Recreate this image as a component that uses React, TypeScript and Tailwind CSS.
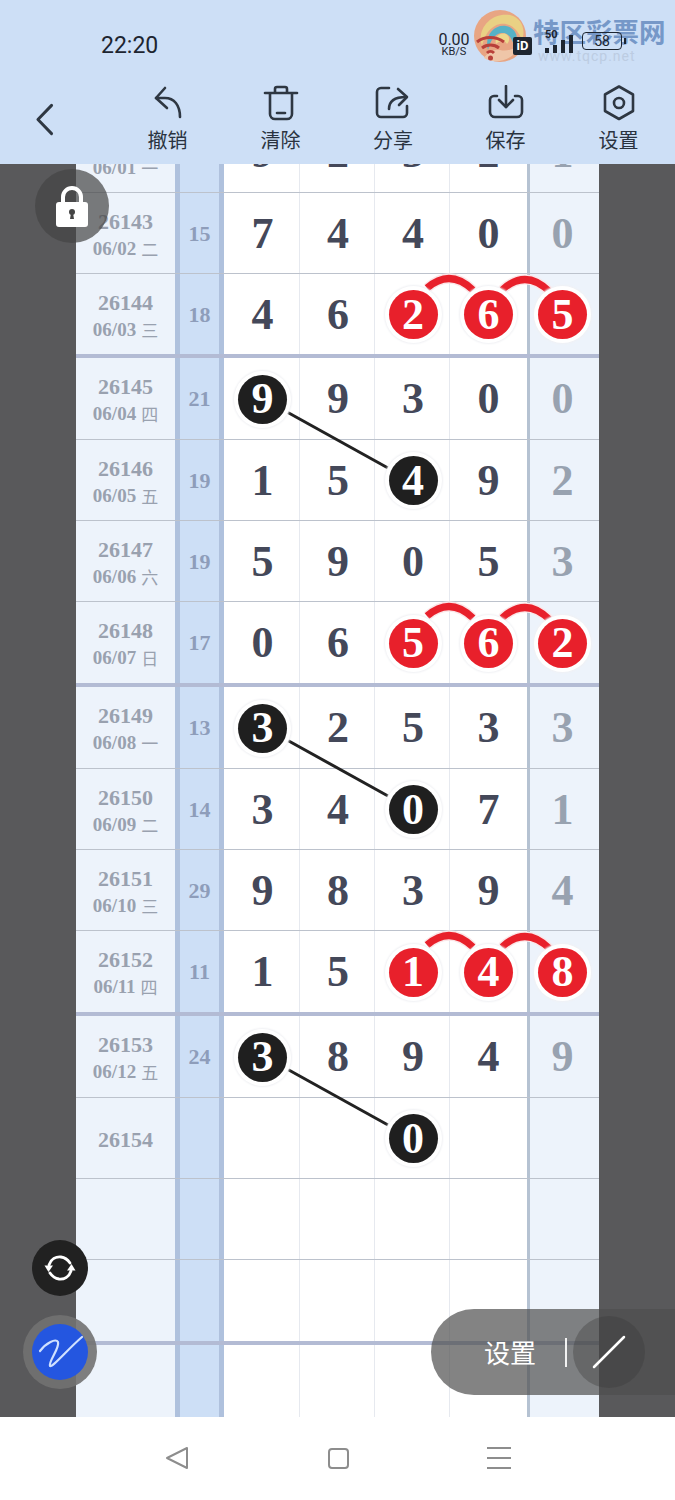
import React from 'react';

const serif = "font-['Liberation_Serif',serif]";
const cjk = "font-['Noto_Sans_CJK_SC','Noto_Sans',sans-serif]";

type RowData = {
  id?: string;
  date?: string;
  week?: string;
  sum?: string;
  nums?: string[];
  last?: string;
  h: string;
  thick?: boolean;
  black?: number;
  red?: boolean;
};

const rows: RowData[] = [
  { id: '26142', date: '06/01', week: '一', sum: '16', nums: ['9', '2', '3', '2'], last: '1', h: 'h-[81px]' },
  { id: '26143', date: '06/02', week: '二', sum: '15', nums: ['7', '4', '4', '0'], last: '0', h: 'h-[81px]' },
  { id: '26144', date: '06/03', week: '三', sum: '18', nums: ['4', '6', '2', '6'], last: '5', h: 'h-[84px]', thick: true, red: true },
  { id: '26145', date: '06/04', week: '四', sum: '21', nums: ['9', '9', '3', '0'], last: '0', h: 'h-[82px]', black: 0 },
  { id: '26146', date: '06/05', week: '五', sum: '19', nums: ['1', '5', '4', '9'], last: '2', h: 'h-[81px]', black: 2 },
  { id: '26147', date: '06/06', week: '六', sum: '19', nums: ['5', '9', '0', '5'], last: '3', h: 'h-[81px]' },
  { id: '26148', date: '06/07', week: '日', sum: '17', nums: ['0', '6', '5', '6'], last: '2', h: 'h-[85px]', thick: true, red: true },
  { id: '26149', date: '06/08', week: '一', sum: '13', nums: ['3', '2', '5', '3'], last: '3', h: 'h-[82px]', black: 0 },
  { id: '26150', date: '06/09', week: '二', sum: '14', nums: ['3', '4', '0', '7'], last: '1', h: 'h-[81px]', black: 2 },
  { id: '26151', date: '06/10', week: '三', sum: '29', nums: ['9', '8', '3', '9'], last: '4', h: 'h-[81px]' },
  { id: '26152', date: '06/11', week: '四', sum: '11', nums: ['1', '5', '1', '4'], last: '8', h: 'h-[85px]', thick: true, red: true },
  { id: '26153', date: '06/12', week: '五', sum: '24', nums: ['3', '8', '9', '4'], last: '9', h: 'h-[82px]', black: 0 },
  { id: '26154', nums: ['', '', '0', ''], h: 'h-[81px]', black: 2 },
  { h: 'h-[81px]' },
  { h: 'h-[85px]', thick: true },
  { h: 'h-[81px]' },
];

function Ball({ n, red }: { n: string; red?: boolean }) {
  return (
    <span
      className={`relative z-20 flex h-[49px] w-[49px] items-center justify-center rounded-full text-[44px] font-bold leading-none text-white shadow-[0_0_0_4px_#fff,0_0_2px_5px_#f0f1f4] ${red ? 'bg-[#e8202b]' : 'bg-[#1f1f1f]'}`}
    >
      {n}
    </span>
  );
}

function Row({ row }: { row: RowData }) {
  const line = row.thick ? 'border-b-4 border-[#b3bbd4]' : 'border-b border-[#bcc2cc]';
  const nums = row.nums || ['', '', '', ''];
  const ballAt = (i: number) => row.black === i || (row.red && i >= 2);
  return (
    <div className={`grid grid-cols-[99px_49px_76px_75px_75px_77px_72px] ${row.h} ${line} ${serif}`}>
      <div className="flex flex-col items-center justify-center bg-[#edf3fb] pt-[2px] font-bold text-[#99a1af]">
        {row.id && <span className="text-[22px] leading-[25px]">{row.id}</span>}
        {row.date && (
          <span className="mt-[4px] flex items-center gap-[5px] text-[19px] leading-[22px]">
            {row.date}
            <span className={`${cjk} text-[17px] font-normal`}>{row.week}</span>
          </span>
        )}
      </div>
      <div className="flex items-center justify-center border-x-[5px] border-x-[#afc1dd] bg-[#cddff6] text-[22px] font-bold text-[#8e9dba]">
        {row.sum}
      </div>
      {nums.map((n, i) => (
        <div
          key={i}
          className={`flex items-center justify-center bg-white pt-[1px] text-[44px] font-bold leading-none text-[#444859] ${i < 3 ? 'border-r border-[#e6e9ef] pl-[2px]' : ''}`}
        >
          {ballAt(i) ? <Ball n={n} red={row.red} /> : n}
        </div>
      ))}
      <div className="flex items-center justify-center border-l-[3px] border-l-[#b5c2d2] bg-[#edf3fb] pr-1 pt-[1px] text-[44px] font-bold leading-none text-[#98a2b0]">
        {row.red ? <Ball n={row.last || ''} red /> : row.last}
      </div>
    </div>
  );
}

// strokes that tie the balls together, in page coordinates
function Links() {
  return (
    <svg className="pointer-events-none absolute left-0 top-0 z-10" width="675" height="1500" fill="none">
      {[314, 642, 971].map((y) => (
        <g key={y}>
          <path d={`M427 ${y - 26}Q450 ${y - 46} 473 ${y - 24}M502 ${y - 24}Q526 ${y - 46} 550 ${y - 22}`} stroke="#fbe6e8" strokeWidth="10" />
          <path d={`M427 ${y - 26}Q450 ${y - 46} 473 ${y - 24}M502 ${y - 24}Q526 ${y - 46} 550 ${y - 22}`} stroke="#e8202b" strokeWidth="7" />
        </g>
      ))}
      {[400, 728, 1057].map((y) => (
        <path key={y} d={`M287 ${y + 12}L388 ${y + 68}`} stroke="#222" strokeWidth="3" />
      ))}
    </svg>
  );
}

function ToolIcon({ name }: { name: string }) {
  const common = { width: 36, height: 36, viewBox: '0 0 36 36', fill: 'none', stroke: '#2e3742', strokeWidth: 2.6, strokeLinecap: 'round' as const, strokeLinejoin: 'round' as const };
  if (name === 'undo')
    return (
      <svg {...common}>
        <path d="M15 3L6 13L17 23" />
        <path d="M6 13H15C24 13 30 20 30 32" />
      </svg>
    );
  if (name === 'trash')
    return (
      <svg {...common}>
        <path d="M2 8H34" />
        <path d="M12 7V4a2 2 0 012-2h8a2 2 0 012 2v3" />
        <path d="M7 9V29a5 5 0 005 5h12a5 5 0 005-5V9" />
        <path d="M14 28H22" />
      </svg>
    );
  if (name === 'share')
    return (
      <svg {...common}>
        <path d="M14 3H6a4 4 0 00-4 4V28a4 4 0 004 4H28a4 4 0 004-4V21" />
        <path d="M14 24C14 16 19 12 31 12" />
        <path d="M23 4L32 12L24 20" />
      </svg>
    );
  if (name === 'save')
    return (
      <svg {...common}>
        <path d="M9 11H6a4 4 0 00-4 4V27a5 5 0 005 5H29a5 5 0 005-5V15a4 4 0 00-4-4H27" />
        <path d="M18 1V22" />
        <path d="M11 15L18 22L25 15" />
      </svg>
    );
  return (
    <svg {...common}>
      <path d="M18 1.5L32 9.5V26L18 34L4 26V9.5Z" />
      <circle cx="18" cy="18" r="5" />
    </svg>
  );
}

const tools = [
  { icon: 'undo', label: '撤销' },
  { icon: 'trash', label: '清除' },
  { icon: 'share', label: '分享' },
  { icon: 'save', label: '保存' },
  { icon: 'gear', label: '设置' },
];

function Header() {
  return (
    <header className={`relative h-[164px] shrink-0 bg-[#cddff6] ${cjk}`}>
      {/* site watermark sits behind the status icons */}
      <svg className="absolute left-[474px] top-[10px]" width="54" height="54" viewBox="0 0 54 54">
        <circle cx="26" cy="26" r="26" fill="#e8a583" />
        <path d="M8 36C2 18 18 2 36 5C48 8 52 20 48 30C44 20 36 12 26 14C16 16 10 26 8 36Z" fill="#e9d184" />
        <path d="M14 40C10 26 20 14 32 16C42 18 46 28 40 36C38 28 34 22 27 23C20 24 16 32 14 40Z" fill="#56b2c6" />
        <path d="M22 34C20 27 26 22 32 24C36 26 36 31 33 34C31 30 26 30 22 34Z" fill="#ecd98c" />
        <path d="M10 48C24 56 42 48 50 32C44 38 34 42 26 40C20 39 14 42 10 48Z" fill="#efc6a8" />
        <g fill="none" stroke="#b8403a" strokeWidth="3">
          <path d="M3 32C10 26 22 26 30 32" />
          <path d="M8 38C13 34 20 34 25 38" />
          <path d="M13 43C15 41 18 41 20 43" />
        </g>
        <circle cx="16.500" cy="48" r="2.500" fill="#b8403a" />
      </svg>
      <span className="absolute left-[533px] top-[14px] text-[26.500px] font-bold leading-[34px] text-[#7698c8]">特区彩票网</span>
      <span className="absolute left-[538px] top-[48px] font-['Roboto',sans-serif] text-[14px] leading-[16px] tracking-[1px] text-[#bccce2]">www.tqcp.net</span>

      <div className="relative flex h-[85px] items-start justify-between pl-[101px] pr-[49px] pt-[32px]">
        <span className="font-['Roboto',sans-serif] text-[23px] leading-[28px] text-[#1d2530]">22:20</span>
        <div className="flex items-start font-['Roboto',sans-serif] text-[#1d2530]">
          <div className="flex w-[32px] flex-col items-center pt-[1px] text-[16px] leading-[14px]">
            0.00
            <span className="text-[11px] leading-[10px]">KB/S</span>
          </div>
          <span className="ml-[43px] mt-[5px] w-[19px] rounded-[2px] bg-[#1d2530] text-center text-[13px] font-bold leading-[18px] text-white">iD</span>
          <div className="relative ml-[13px] flex h-[21px] w-[32px] items-end gap-[4px] pt-[2px]">
            <span className="absolute -top-[3px] left-[0px] text-[11px] font-bold leading-none">50</span>
            <i className="block h-[5px] w-[4px] bg-[#1d2530]" />
            <i className="block h-[8px] w-[4px] bg-[#1d2530]" />
            <i className="block h-[13px] w-[4px] bg-[#1d2530]" />
            <i className="block h-[18px] w-[4px] bg-[#1d2530]" />
          </div>
          <div className="ml-[5px] flex h-[18px] w-[40px] items-center justify-center rounded-[4px] border border-[#1d2530] text-[14px] leading-none">58</div>
          <i className="ml-[2px] mt-[6px] block h-[6px] w-[2px] bg-[#1d2530]" />
        </div>
      </div>

      <div className="flex items-start pl-[35px]">
        <svg className="mt-[18px]" width="20" height="33" viewBox="0 0 20 33" fill="none" stroke="#2e3742" strokeWidth="3" strokeLinecap="round" strokeLinejoin="round">
          <path d="M17 2L3 16.500L17 31" />
        </svg>
        <div className="ml-[56.500px] grid grid-cols-[113px_113px_112px_113px_113px]">
          {tools.map((t) => (
            <div key={t.label} className="flex flex-col items-center">
              <ToolIcon name={t.icon} />
              <span className="mt-[5px] text-[20px] leading-[28px] text-[#2a3340]">{t.label}</span>
            </div>
          ))}
        </div>
      </div>
    </header>
  );
}

function Floating() {
  return (
    <>
      <button className="absolute left-[35px] top-[169px] z-30 flex h-[74px] w-[74px] items-center justify-center rounded-full bg-[#454545]/70">
        <svg width="32" height="42" viewBox="0 0 32 42">
          <path d="M7 20V12a9 9 0 0118 0v8" fill="none" stroke="#fff" strokeWidth="4" />
          <rect x="0" y="17" width="32" height="25" rx="3" fill="#fff" />
          <circle cx="16" cy="27" r="3" fill="#444" />
          <path d="M15 28h2l1 6h-4z" fill="#444" />
        </svg>
      </button>

      <button className="absolute left-[32px] top-[1240px] z-30 flex h-[56px] w-[56px] items-center justify-center rounded-full bg-[#212121]">
        <svg width="32" height="32" viewBox="0 0 32 32" fill="none" stroke="#fff" strokeWidth="2.800" strokeLinecap="round">
          <path d="M5 13C7 7 12 4.500 17 5C21 5.500 24 8 26 11" />
          <path d="M27 19C25 25 20 27.500 15 27C11 26.500 8 24 6 21" />
          <path d="M0.500 13.500H9L4.500 20Z" fill="#fff" stroke="none" />
          <path d="M31.500 18.500H23L27.500 12Z" fill="#fff" stroke="none" />
        </svg>
      </button>

      <button className="absolute left-[23px] top-[1315px] z-30 flex h-[74px] w-[74px] items-center justify-center rounded-full bg-[#717171]/90">
        <span className="flex h-[56px] w-[56px] items-center justify-center rounded-full bg-[#2456e0]">
          <svg width="56" height="56" viewBox="0 0 56 56" fill="none" stroke="#cfe0ff" strokeWidth="2.200" strokeLinecap="round">
            <path d="M8 27C14 19 24 14 26 18C28 24 16 38 18 42C20 44 36 25 50 13" />
          </svg>
        </span>
      </button>

      <div className={`absolute left-[431px] top-[1309px] z-30 flex h-[86px] w-[244px] items-center rounded-l-[43px] bg-[#4f4f4f]/70 pl-[53px] text-[26px] text-white ${cjk}`}>
        <span className="leading-none">设置</span>
        <i className="ml-[29px] block h-[29px] w-[2px] bg-white/90" />
        <span className="ml-[6px] flex h-[72px] w-[72px] items-center justify-center rounded-full bg-[#3a3a3a]/35">
          <svg width="34" height="34" viewBox="0 0 34 34" stroke="#fff" strokeWidth="2.500" strokeLinecap="round">
            <path d="M2 32L32 2" />
          </svg>
        </span>
      </div>
    </>
  );
}

function NavBar() {
  return (
    <footer className="flex h-[83px] shrink-0 items-start bg-white pl-[165px] pt-[29px]">
      <svg width="24" height="24" viewBox="0 0 24 24" fill="none" stroke="#8d8d8d" strokeWidth="2" strokeLinejoin="round">
        <path d="M22 2V22L2 12Z" />
      </svg>
      <span className="ml-[139px] mt-[2px] block h-[21px] w-[21px] rounded-[4px] border-2 border-[#8d8d8d]" />
      <div className="ml-[138px] flex h-[24px] w-[24px] flex-col justify-between py-[1px]">
        <i className="block h-[2px] bg-[#8d8d8d]" />
        <i className="block h-[2px] bg-[#8d8d8d]" />
        <i className="block h-[2px] bg-[#8d8d8d]" />
      </div>
    </footer>
  );
}

export default function App() {
  return (
    <div className="relative flex h-[1500px] w-[675px] flex-col overflow-hidden bg-white">
      <Header />
      <main className="min-h-0 flex-1 overflow-hidden bg-[#59595b]">
        <div className="ml-[76px] mt-[-52px] w-[523px]">
          {rows.map((r, i) => (
            <Row key={i} row={r} />
          ))}
        </div>
      </main>
      <NavBar />
      <Links />
      <Floating />
    </div>
  );
}
